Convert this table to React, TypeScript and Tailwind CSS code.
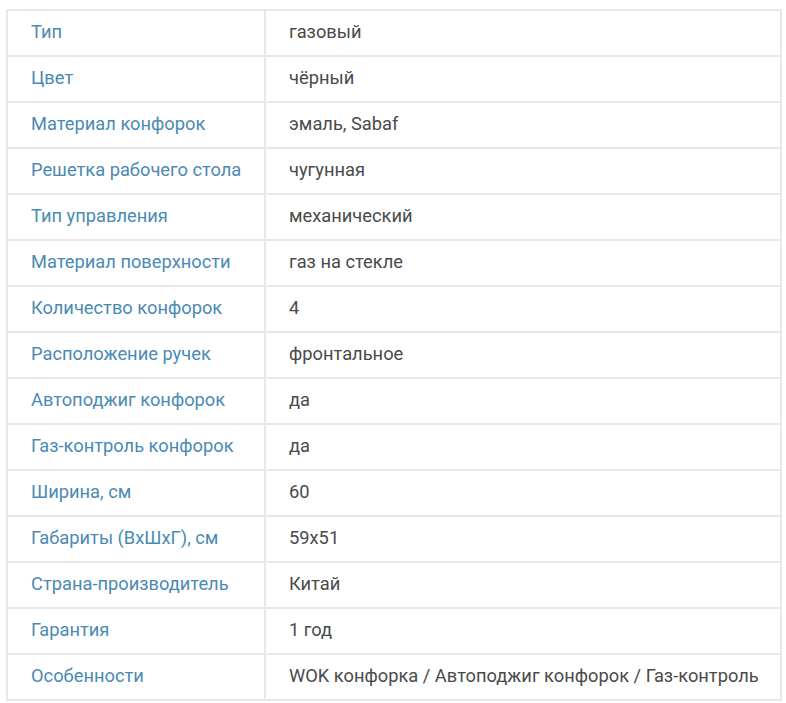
import React from 'react';

const specs: [string, string][] = [
  ['Тип', 'газовый'],
  ['Цвет', 'чёрный'],
  ['Материал конфорок', 'эмаль, Sabaf'],
  ['Решетка рабочего стола', 'чугунная'],
  ['Тип управления', 'механический'],
  ['Материал поверхности', 'газ на стекле'],
  ['Количество конфорок', '4'],
  ['Расположение ручек', 'фронтальное'],
  ['Автоподжиг конфорок', 'да'],
  ['Газ-контроль конфорок', 'да'],
  ['Ширина, см', '60'],
  ['Габариты (ВхШхГ), см', '59x51'],
  ['Страна-производитель', 'Китай'],
  ['Гарантия', '1 год'],
  ['Особенности', 'WOK конфорка / Автоподжиг конфорок / Газ-контроль'],
];

const App = () => {
  return (
    <div className="bg-white min-h-screen pt-[9px] pl-[6px] font-['Roboto',sans-serif]">
      <table className="w-[776px] border-collapse text-[18.3px]">
        <tbody>
          {specs.map(([label, value]) => (
            <tr key={label} className="h-[46px]">
              <td className="w-[258px] border-2 border-[#e8e8e8] pl-[23px] pb-[2px] text-[#4a8ab4] align-middle">
                {label}
              </td>
              <td className="border-2 border-[#e8e8e8] pl-[23px] pb-[2px] text-[#4a4a4a] align-middle">
                {value}
              </td>
            </tr>
          ))}
        </tbody>
      </table>
    </div>
  );
};

export default App;
